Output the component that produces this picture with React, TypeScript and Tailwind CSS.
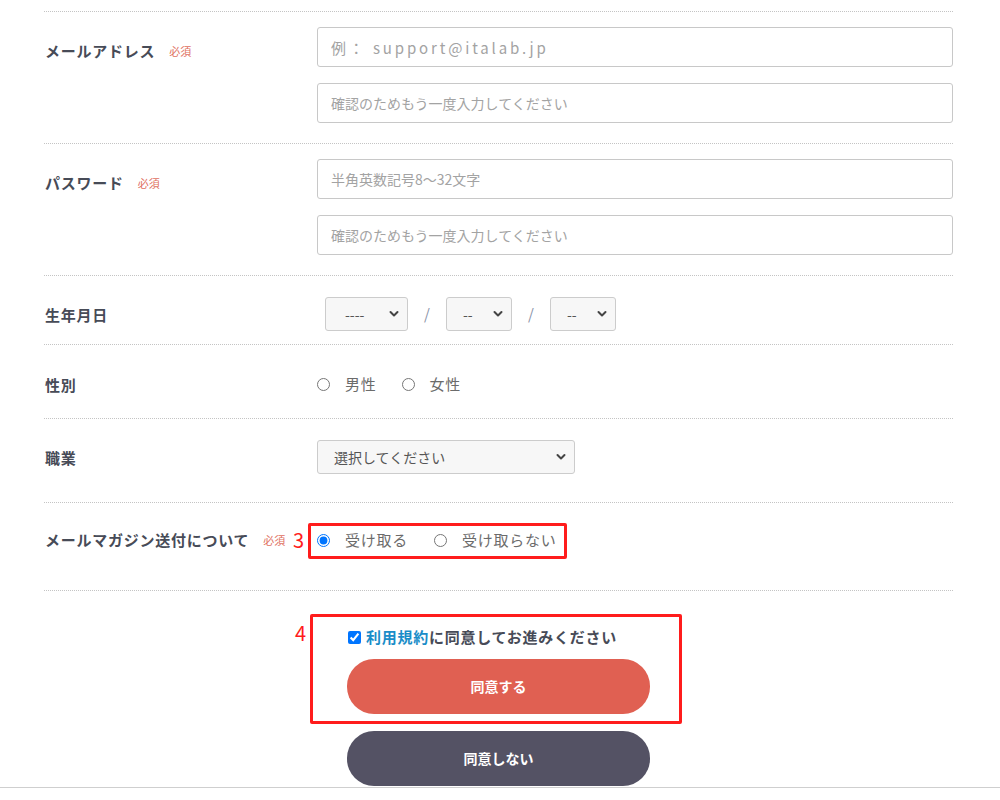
import React from "react";

const labelCls = "text-[15px] font-bold tracking-[0.05em] text-[#474b57] leading-[22px]";

function Required() {
  return <span className="ml-[14px] text-[11px] leading-[22px] text-[#e0705f]">必須</span>;
}

function Chevron() {
  return (
    <svg
      className="pointer-events-none absolute right-[9px] top-1/2 -translate-y-1/2"
      width="10"
      height="7"
      viewBox="0 0 10 7"
      fill="none"
    >
      <path d="M1.5 1.5 L5 5 L8.5 1.5" stroke="#444" strokeWidth="2" strokeLinecap="round" strokeLinejoin="round" />
    </svg>
  );
}

function Select({ width, text, pad }: { width: string; text: string; pad: string }) {
  return (
    <div className={`relative h-[34px] ${width}`}>
      <select
        defaultValue=""
        className={`h-full w-full appearance-none rounded-[3px] border border-[#cccccc] bg-[#f7f7f7] text-[14px] text-[#555] outline-none ${pad}`}
      >
        <option value="">{text}</option>
      </select>
      <Chevron />
    </div>
  );
}

function TextInput({ placeholder, wide }: { placeholder: string; wide?: boolean }) {
  return (
    <input
      type="text"
      placeholder={placeholder}
      className={`h-[40px] w-full rounded-[3px] border border-[#c8c8c8] bg-white px-[13px] text-[14px] outline-none placeholder:text-[#a3a3a3] ${
        wide ? "text-[15px] tracking-[0.19em]" : ""
      }`}
    />
  );
}

function Radio({ label, checked, name }: { label: string; checked?: boolean; name: string }) {
  return (
    <label className="flex items-center">
      <input
        type="radio"
        name={name}
        defaultChecked={checked}
        className="m-0 h-[13px] w-[13px] accent-[#0075ff]"
      />
      <span className="ml-[15px] text-[15px] tracking-[0.05em] leading-[22px] text-[#6b6b6b]">{label}</span>
    </label>
  );
}

export default function App() {
  return (
    <div className="min-h-[800px] bg-white font-['Noto_Sans_CJK_JP','Noto_Sans',sans-serif]">
      <div className="ml-[44px] w-[909px] pt-[11px]">
        {/* メールアドレス */}
        <div className="flex border-t border-dotted border-[#c4c4c4] pt-[15px] pb-[20px]">
          <div className="flex w-[273px] items-start pl-[1px] pt-[13px]">
            <span className={labelCls}>メールアドレス</span>
            <Required />
          </div>
          <div className="flex flex-1 flex-col gap-[16px]">
            <TextInput placeholder="例： support@italab.jp" wide />
            <TextInput placeholder="確認のためもう一度入力してください" />
          </div>
        </div>

        {/* パスワード */}
        <div className="flex border-t border-dotted border-[#c4c4c4] pt-[15px] pb-[20px]">
          <div className="flex w-[273px] items-start pl-[1px] pt-[13px]">
            <span className={labelCls}>パスワード</span>
            <Required />
          </div>
          <div className="flex flex-1 flex-col gap-[16px]">
            <TextInput placeholder="半角英数記号8～32文字" />
            <TextInput placeholder="確認のためもう一度入力してください" />
          </div>
        </div>

        {/* 生年月日 */}
        <div className="flex items-center border-t border-dotted border-[#c4c4c4] pt-[21px] pb-[13px]">
          <div className="w-[273px] pl-[1px]">
            <span className={labelCls}>生年月日</span>
          </div>
          <div className="flex items-center pl-[8px]">
            <Select width="w-[83px]" text="----" pad="pl-[19px]" />
            <span className="w-[38px] text-center text-[15px] text-[#8a93a8]">/</span>
            <Select width="w-[66px]" text="--" pad="pl-[16px]" />
            <span className="w-[38px] text-center text-[15px] text-[#8a93a8]">/</span>
            <Select width="w-[66px]" text="--" pad="pl-[16px]" />
          </div>
        </div>

        {/* 性別 */}
        <div className="flex items-center border-t border-dotted border-[#c4c4c4] pt-[27px] pb-[22px]">
          <div className="w-[273px] pl-[1px]">
            <span className={labelCls}>性別</span>
          </div>
          <div className="flex items-center gap-[25px]">
            <Radio name="sex" label="男性" />
            <Radio name="sex" label="女性" />
          </div>
        </div>

        {/* 職業 */}
        <div className="flex items-center border-t border-dotted border-[#c4c4c4] pt-[21px] pb-[28px]">
          <div className="w-[273px] pl-[1px]">
            <span className={labelCls}>職業</span>
          </div>
          <Select width="w-[258px]" text="選択してください" pad="pl-[16px]" />
        </div>

        {/* メールマガジン */}
        <div className="flex items-center border-t border-dotted border-[#c4c4c4] pt-[26px] pb-[39px]">
          <div className="flex w-[273px] items-center pl-[1px]">
            <span className={labelCls}>メールマガジン送付について</span>
            <Required />
          </div>
          <div className="relative flex items-center gap-[26px]">
            <Radio name="mag" label="受け取る" checked />
            <Radio name="mag" label="受け取らない" />
            <div className="pointer-events-none absolute -left-[9px] -top-[6px] h-[36px] w-[259px] rounded-[2px] border-[3px] border-[#ff1c1c]" />
            <span className="absolute -left-[24px] top-1/2 -translate-y-1/2 text-[20px] leading-none text-[#ff1c1c]">3</span>
          </div>
        </div>

        {/* 同意 */}
        <div className="flex justify-center border-t border-dotted border-[#c4c4c4] pt-[35px]">
          <div className="w-[303px]">
            <div className="relative">
              <label className="flex h-[22px] items-center">
                <input type="checkbox" defaultChecked className="m-0 ml-[1px] h-[13px] w-[13px] accent-[#0075ff]" />
                <span className="ml-[5px] text-[15px] font-bold tracking-[0.05em] text-[#474b57]">
                  <span className="text-[#1a8dc8]">利用規約</span>に同意してお進みください
                </span>
              </label>
              <button className="mt-[11px] flex h-[55px] w-[303px] items-center justify-center rounded-[27px] bg-[#e06052] text-[14px] font-bold text-white">
                同意する
              </button>
              <div className="pointer-events-none absolute -left-[37px] -top-[12px] h-[110px] w-[372px] rounded-[2px] border-[3px] border-[#ff1c1c]" />
              <span className="absolute -left-[52px] -top-[3px] text-[20px] leading-none text-[#ff1c1c]">4</span>
            </div>
            <button className="mt-[17px] flex h-[55px] w-[303px] items-center justify-center rounded-[27px] bg-[#545264] text-[14px] font-bold text-white">
              同意しない
            </button>
          </div>
        </div>
      </div>
      <div className="mt-[1px] h-[13px] border-t border-[#cfcfcf] bg-white" />
    </div>
  );
}
